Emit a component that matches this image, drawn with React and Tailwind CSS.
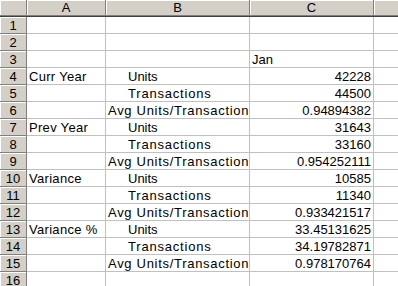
import React from "react";

const rows = [
  ["", "", "", ""],
  ["", "", "", ""],
  ["", "", "Jan", ""],
  ["Curr Year", "Units", "42228", "n"],
  ["", "Transactions", "44500", "n"],
  ["", "Avg Units/Transaction", "0.94894382", "n"],
  ["Prev Year", "Units", "31643", "n"],
  ["", "Transactions", "33160", "n"],
  ["", "Avg Units/Transaction", "0.954252111", "n"],
  ["Variance", "Units", "10585", "n"],
  ["", "Transactions", "11340", "n"],
  ["", "Avg Units/Transaction", "0.933421517", "n"],
  ["Variance %", "Units", "33.45131625", "n"],
  ["", "Transactions", "34.19782871", "n"],
  ["", "Avg Units/Transaction", "0.978170764", "n"],
  ["", "", "", ""],
];

const hdr =
  "bg-[#d4d0c8] border-r border-b border-[#808080] shadow-[inset_1px_1px_0_#ffffff] flex items-center justify-center shrink-0";
const cell = "border-r border-b border-[#c0c0c0] shrink-0 flex items-center overflow-hidden whitespace-nowrap";

function bClass(t) {
  if (t === "Units") return "pl-[22px]";
  if (t === "Transactions") return "pl-[22px] tracking-[0.8px]";
  if (t.startsWith("Avg")) return "pl-[2px] tracking-[0.7px]";
  return "pl-[2px]";
}

export default function App() {
  return (
    <div
      className="w-[398px] h-[286px] overflow-hidden bg-white text-black text-[13px] leading-none"
      style={{ fontFamily: '"Liberation Sans", Arial, sans-serif' }}
    >
      <div className="flex h-[17px] border-b border-[#404040]">
        <div className={`${hdr} w-[27px] h-[16px]`}></div>
        <div className={`${hdr} w-[79px] h-[16px]`}>A</div>
        <div className={`${hdr} w-[144px] h-[16px]`}>B</div>
        <div className={`${hdr} w-[124px] h-[16px]`}>C</div>
        <div className={`${hdr} flex-1 h-[16px] border-r-0`}></div>
      </div>
      {rows.map((r, i) => (
        <div key={i} className="flex h-[17px]">
          <div className={`${hdr} w-[27px] h-[17px]`}>{i + 1}</div>
          <div className={`${cell} w-[79px] h-[17px] pl-[2px] tracking-[0.3px]`}>{r[0]}</div>
          <div className={`${cell} w-[144px] h-[17px] ${bClass(r[1])}`}>{r[1]}</div>
          <div
            className={`${cell} w-[124px] h-[17px] ${
              r[3] === "n" ? "justify-end pr-[2px]" : "pl-[2px]"
            }`}
          >
            {r[2]}
          </div>
          <div className={`${cell} flex-1 h-[17px] border-r-0`}></div>
        </div>
      ))}
    </div>
  );
}
